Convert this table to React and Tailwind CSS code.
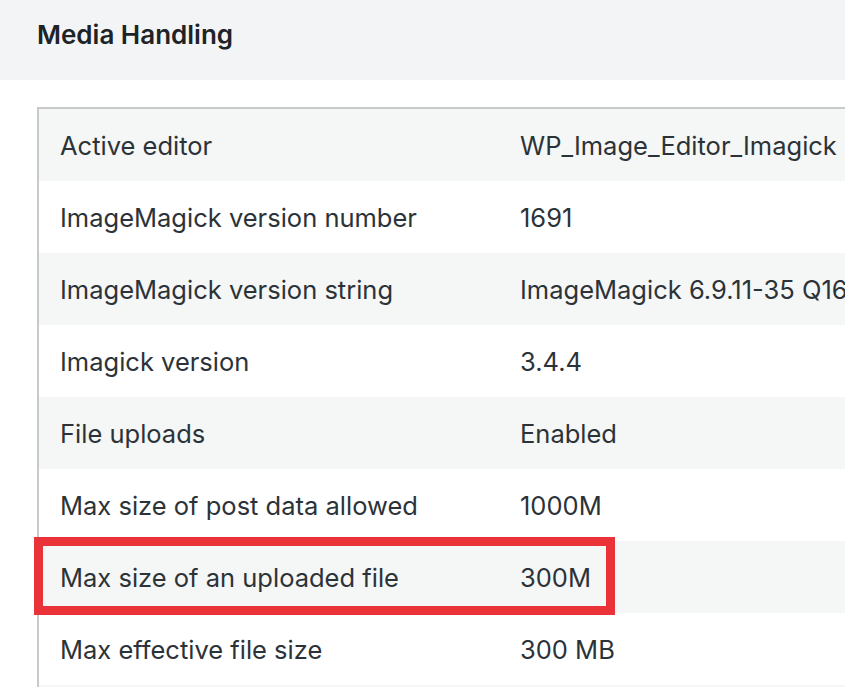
export default function App() {
  const rows = [
    ["Active editor", "WP_Image_Editor_Imagick"],
    ["ImageMagick version number", "1691"],
    ["ImageMagick version string", "ImageMagick 6.9.11-35 Q16 x86_64 2021-01-22 https://imagemagick.org"],
    ["Imagick version", "3.4.4"],
    ["File uploads", "Enabled"],
    ["Max size of post data allowed", "1000M"],
    ["Max size of an uploaded file", "300M"],
    ["Max effective file size", "300 MB"],
    ["", ""],
  ];
  return (
    <div
      className="relative w-[845px] h-[687px] overflow-hidden bg-white text-[#2c3338]"
      style={{ fontFamily: "Inter, 'Liberation Sans', sans-serif" }}
    >
      <div className="h-[80px] bg-[#f3f4f5] pl-[37px] pt-[17px]">
        <h2 className="text-[26px] font-semibold leading-[36px] text-[#1d2327]">Media Handling</h2>
      </div>
      <div className="ml-[37px] mt-[27px] border-l-2 border-t-2 border-[#c8c9cb] w-[900px]">
        {rows.map(([k, v], i) => (
          <div
            key={i}
            className={`flex h-[72px] items-center pt-[2px] text-[25.5px] whitespace-nowrap ${i % 2 === 0 ? "bg-[#f5f6f6]" : "bg-white"}`}
          >
            <div className="w-[481px] pl-[21px] shrink-0">{k}</div>
            <div>{v}</div>
          </div>
        ))}
      </div>
      <div className="absolute left-[34px] top-[537px] w-[581px] h-[78px] border-[9px] border-[#ea3338]" />
    </div>
  );
}
